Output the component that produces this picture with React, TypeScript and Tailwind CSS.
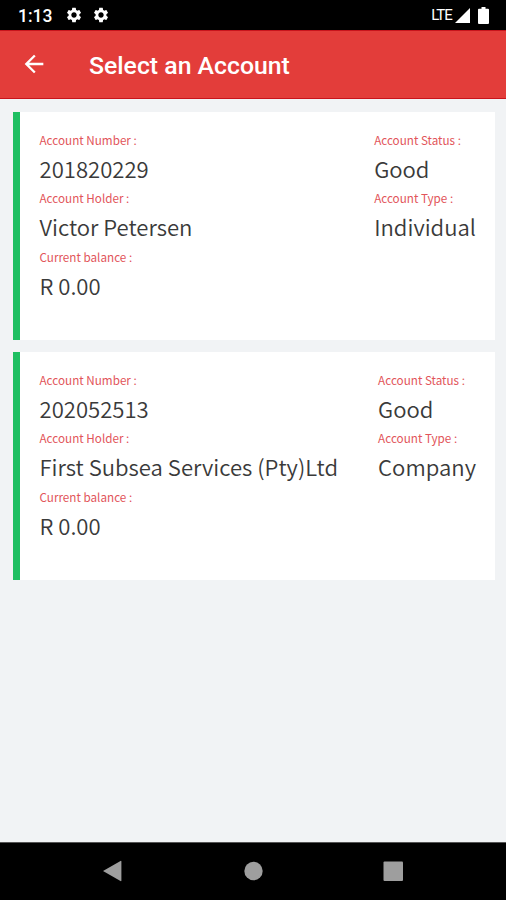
import { MdSettings, MdArrowBack } from "react-icons/md"

interface Account {
  number: string
  holder: string
  balance: string
  status: string
  type: string
}

const accounts: Account[] = [
  {
    number: "201820229",
    holder: "Victor Petersen",
    balance: "R 0.00",
    status: "Good",
    type: "Individual",
  },
  {
    number: "202052513",
    holder: "First Subsea Services (Pty)Ltd",
    balance: "R 0.00",
    status: "Good",
    type: "Company",
  },
]

function Field({ label, value }: { label: string; value: string }) {
  return (
    <div className="h-[58.5px] whitespace-nowrap">
      <div className="text-[11.7px] leading-[17px] text-[#e2555a]">{label} :</div>
      <div className="text-[22.1px] leading-[41px] font-[350] text-[#3a3a3a]">{value}</div>
    </div>
  )
}

function AccountCard({ account }: { account: Account }) {
  return (
    <div className="flex h-[227.5px] justify-between border-l-[7px] border-[#1fbf62] bg-white pt-[18.9px] pr-[19px] pl-[19.5px]">
      <div>
        <Field label="Account Number" value={account.number} />
        <Field label="Account Holder" value={account.holder} />
        <Field label="Current balance" value={account.balance} />
      </div>
      <div>
        <Field label="Account Status" value={account.status} />
        <Field label="Account Type" value={account.type} />
      </div>
    </div>
  )
}

function StatusBar() {
  return (
    <div className="flex h-[30px] items-center justify-between bg-black pr-[17px] pl-[18px] text-white">
      <div className="flex items-center">
        <span className="w-[47px] pt-[2px] text-[17.5px] leading-[28px] font-medium">1:13</span>
        <MdSettings className="mr-[9px] h-[18px] w-[18px]" />
        <MdSettings className="h-[18px] w-[18px]" />
      </div>
      <div className="flex items-center">
        <span className="mr-[3px] text-[15px] leading-[30px] tracking-[-0.9px]">LTE</span>
        <svg className="mr-[8px] h-[15px] w-[15px]" viewBox="0 0 15 15" fill="currentColor">
          <path d="M15 0v15H0z" />
        </svg>
        <svg className="h-[17px] w-[11px]" viewBox="0 0 11 17" fill="currentColor">
          <path d="M3.5 0h4v1.8H10a1 1 0 0 1 1 1V16a1 1 0 0 1-1 1H1a1 1 0 0 1-1-1V2.8a1 1 0 0 1 1-1h2.5z" />
        </svg>
      </div>
    </div>
  )
}

function NavBar() {
  return (
    <div className="h-[58px] border-t border-[#555555] bg-black">
      <svg className="h-[57px] w-full" viewBox="0 0 506 57" fill="#9e9e9e">
        <path d="M103 28 120.5 18a.6.6 0 0 1 .9.5v19a.6.6 0 0 1-.9.5z" />
        <circle cx="253.5" cy="28" r="9.2" />
        <rect x="383.5" y="18.5" width="19.5" height="19.5" rx="1" />
      </svg>
    </div>
  )
}

export default function App() {
  return (
    <div className="flex h-[900px] w-[506px] flex-col overflow-hidden bg-[#f1f3f5] font-['Roboto',sans-serif]">
      <StatusBar />
      <header className="flex h-[69px] items-center border-y border-[#c8141c] bg-[#e33d3a] pl-[20px] text-white">
        <MdArrowBack className="mr-[41px] mb-px h-7 w-7" />
        <h1 className="pt-[2px] text-[24.8px] leading-8 font-medium">Select an Account</h1>
      </header>
      <main className="flex flex-1 flex-col gap-[12.5px] pt-[13px] pr-[11px] pl-[13px] font-['Noto_Sans_CJK_SC',sans-serif]">
        {accounts.map((account) => (
          <AccountCard key={account.number} account={account} />
        ))}
      </main>
      <NavBar />
    </div>
  )
}
